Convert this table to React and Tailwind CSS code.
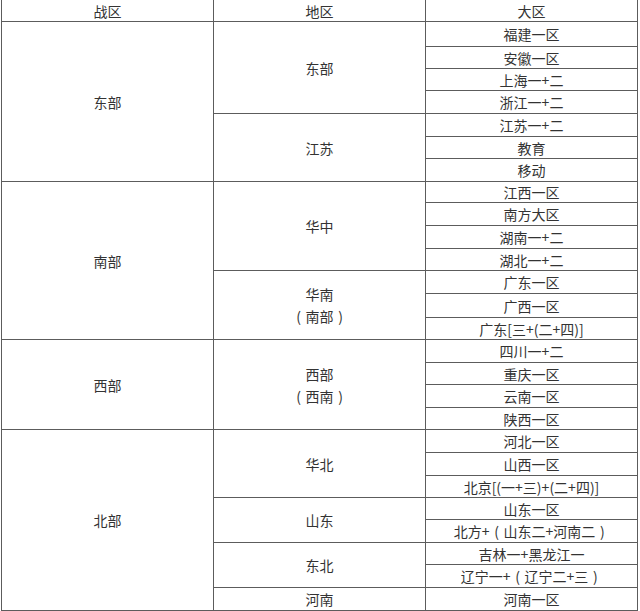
import React from "react";

const rows = [
  "福建一区","安徽一区","上海一+二","浙江一+二","江苏一+二","教育","移动",
  "江西一区","南方大区","湖南一+二","湖北一+二","广东一区","广西一区","广东[三+(二+四)]",
  "四川一+二","重庆一区","云南一区","陕西一区",
  "河北一区","山西一区","北京[(一+三)+(二+四)]","山东一区","北方+（山东二+河南二）","吉林一+黑龙江一","辽宁一+（辽宁二+三）","河南一区",
];

const col1 = [
  { t: ["东部"], span: "row-span-7" },
  { t: ["南部"], span: "row-span-7" },
  { t: ["西部"], span: "row-span-4" },
  { t: ["北部"], span: "row-span-8" },
];
const col2 = [
  { t: ["东部"], span: "row-span-4" },
  { t: ["江苏"], span: "row-span-3" },
  { t: ["华中"], span: "row-span-4" },
  { t: ["华南", "（南部）"], span: "row-span-3" },
  { t: ["西部", "（西南）"], span: "row-span-4" },
  { t: ["华北"], span: "row-span-3" },
  { t: ["山东"], span: "row-span-2" },
  { t: ["东北"], span: "row-span-2" },
  { t: ["河南"], span: "row-span-1" },
];
const spanLen = { "row-span-1": 1, "row-span-2": 2, "row-span-3": 3, "row-span-4": 4, "row-span-7": 7, "row-span-8": 8 };

function Txt({ s }) {
  const parts = [];
  let buf = "";
  [...s].forEach((ch, i) => {
    if (ch === "（" || ch === "）") {
      if (buf) parts.push(buf);
      buf = "";
      parts.push(
        <span key={i} className="inline-block w-[14px] text-center">
          {ch === "（" ? "(" : ")"}
        </span>
      );
    } else buf += ch;
  });
  if (buf) parts.push(buf);
  return <span className="whitespace-nowrap">{parts}</span>;
}

const cell = "flex items-center justify-center border-r border-b border-[#5c5c5c]";

function buildItems() {
  const starts1 = {};
  let r = 0;
  col1.forEach((c) => { starts1[r] = c; r += spanLen[c.span]; });
  const starts2 = {};
  r = 0;
  col2.forEach((c) => { starts2[r] = c; r += spanLen[c.span]; });
  const items = [];
  rows.forEach((txt, i) => {
    if (starts1[i]) {
      const c = starts1[i];
      items.push(
        <div key={"a" + i} className={"col-start-1 flex-col leading-[22px] " + cell + " " + c.span}>
          {c.t.map((s) => <Txt key={s} s={s} />)}
        </div>
      );
    }
    if (starts2[i]) {
      const c = starts2[i];
      items.push(
        <div key={"b" + i} className={"col-start-2 flex-col leading-[22px] " + cell + " " + c.span}>
          {c.t.map((s) => <Txt key={s} s={s} />)}
        </div>
      );
    }
    items.push(
      <div key={"c" + i} className={"col-start-3 leading-none " + cell}>
        <Txt s={txt} />
      </div>
    );
  });
  return items;
}

export default function App() {
  return (
    <div className="w-[640px] h-[611px] bg-white overflow-hidden">
      <div
        className="ml-[1px] w-[637px] border-l border-[#5c5c5c] grid grid-cols-[212px_212px_212px] grid-rows-[22px_25px_22px_22px_23px_23px_22px_23px_21px_23px_23px_22px_23px_24px_22px_23px_22px_23px_22px_23px_23px_22px_22px_23px_22px_23px_23px] text-[14px] text-[#333]"
        style={{ fontFamily: '"Noto Sans CJK SC", "Noto Sans", sans-serif' }}
      >
        <div className={"col-start-1 leading-none pt-[1px] " + cell}>战区</div>
        <div className={"col-start-2 leading-none pt-[1px] " + cell}>地区</div>
        <div className={"col-start-3 leading-none pt-[1px] " + cell}>大区</div>
        {buildItems()}
      </div>
    </div>
  );
}
